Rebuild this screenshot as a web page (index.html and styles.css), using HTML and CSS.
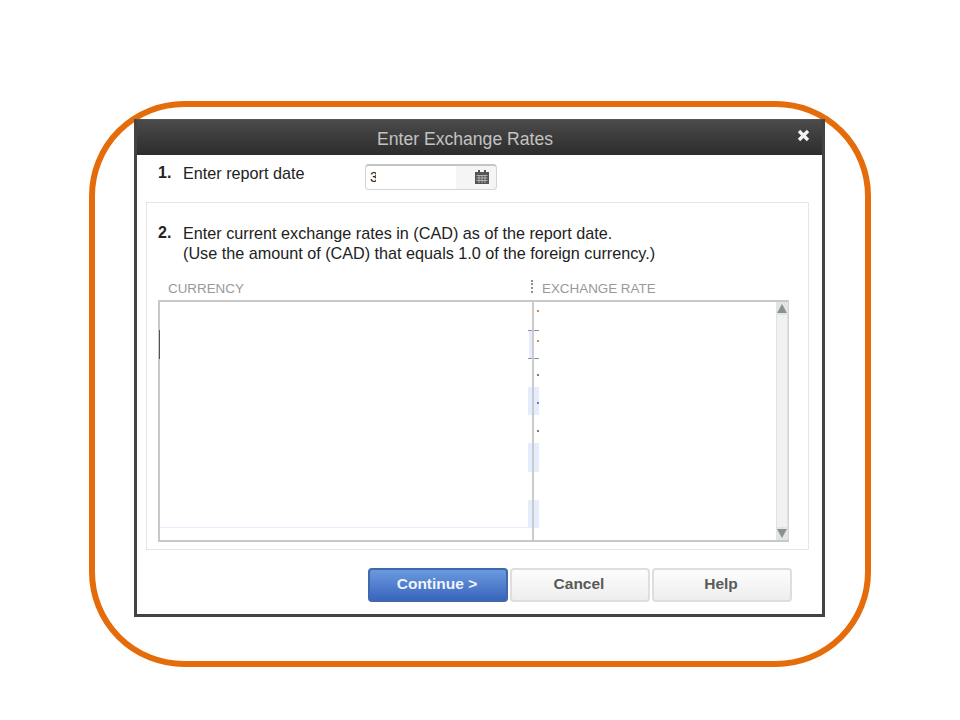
FILE: index.html
```html
<!DOCTYPE html>
<html lang="en">
<head>
    <meta charset="UTF-8">
    <meta name="viewport" content="width=device-width, initial-scale=1.0">
    <title>Enter Exchange Rates</title>
    <link rel="stylesheet" href="styles.css">
</head>
<body>
    <div class="frame">
        <div class="dialog">
            <div class="title-bar">
                <span class="title">Enter Exchange Rates</span>
                <svg class="close-icon" width="13" height="13" viewBox="0 0 13 13">
                    <path d="M2 2 L11 11 M11 2 L2 11" stroke="#f2f2f2" stroke-width="3.4" fill="none"/>
                </svg>
            </div>

            <!-- Step 1 -->
            <div class="step-date">
                <span class="step-num">1.</span>
                <span class="step-label">Enter report date</span>
                <div class="date-input">
                    <span class="date-value">3</span>
                    <svg class="cal-icon" width="14" height="14" viewBox="0 0 14 14">
                        <path d="M0 2 H3 V0 H5 V2 H9 V0 H11 V2 H14 V14 H0 Z" fill="#555"/>
                        <path d="M1.5 5.5 H12.5 M1.5 8 H12.5 M1.5 10.5 H12.5 M4 5 V13 M7 5 V13 M10 5 V13" stroke="#c4c4c4" stroke-width="0.8" fill="none"/>
                    </svg>
                </div>
            </div>

            <!-- Step 2 -->
            <div class="panel">
                <div class="step-rates">
                    <span class="step-num">2.</span>
                    <p class="step-text">Enter current exchange rates in (CAD) as of the report date.<br>(Use the amount of (CAD) that equals 1.0 of the foreign currency.)</p>
                </div>

                <div class="col-heads">
                    <span class="col-currency">CURRENCY</span>
                    <span class="col-grip"></span>
                    <span class="col-rate">EXCHANGE RATE</span>
                </div>

                <div class="grid-box">
                    <div class="rows">
                        <div class="row"><div class="cur-cell"></div><div class="rate-cell"><i class="dot dot-first"></i></div></div>
                        <div class="row current"><div class="cur-cell"></div><div class="rate-cell"><i class="dot dot-second"></i></div></div>
                        <div class="row"><div class="cur-cell"></div><div class="rate-cell"><i class="dot"></i></div></div>
                        <div class="row shade"><div class="cur-cell"></div><div class="rate-cell"><i class="dot"></i></div></div>
                        <div class="row"><div class="cur-cell"></div><div class="rate-cell"><i class="dot"></i></div></div>
                        <div class="row shade"><div class="cur-cell"></div><div class="rate-cell"></div></div>
                        <div class="row"><div class="cur-cell"></div><div class="rate-cell"></div></div>
                        <div class="row shade last"><div class="cur-cell"></div><div class="rate-cell"></div></div>
                    </div>
                    <div class="col-divider"></div>
                    <div class="scrollbar">
                        <div class="scroll-btn"><span class="arrow-up"></span></div>
                        <div class="scroll-track"></div>
                        <div class="scroll-btn"><span class="arrow-down"></span></div>
                    </div>
                </div>
            </div>

            <div class="buttons">
                <button class="btn btn-primary">Continue &gt;</button>
                <button class="btn">Cancel</button>
                <button class="btn">Help</button>
            </div>
        </div>
    </div>
</body>
</html>
```

FILE: styles.css
```css
body {
    margin: 0;
    background-color: #fff;
    font-family: 'Liberation Sans', Arial, sans-serif;
    color: #222;
}

/* Orange rounded outline */
.frame {
    box-sizing: border-box;
    width: 782px;
    height: 566px;
    margin: 101px 0 0 89px;
    padding: 12px 0 0 39px;
    border: 6px solid #e46c0a;
    border-radius: 95px;
}

.dialog {
    box-sizing: border-box;
    width: 691px;
    height: 498px;
    border: 3px solid #434343;
    border-top: 1px solid #555;
    background-color: #fff;
}

.title-bar {
    position: relative;
    height: 35px;
    padding-right: 29px;
    line-height: 39px;
    text-align: center;
    background: linear-gradient(#4b4b4b, #2c2c2c);
}

.title {
    font-size: 17.6px;
    color: #c2c2c2;
}

.close-icon {
    position: absolute;
    top: 9px;
    right: 12px;
}

/* Step rows */
.step-num {
    width: 25px;
    flex-shrink: 0;
    font-size: 16px;
    font-weight: bold;
    line-height: 20px;
}

.step-date {
    display: flex;
    align-items: flex-start;
    height: 26px;
    padding: 9px 0 12px 21px;
}

.step-date .step-num,
.step-label {
    line-height: 18px;
}

.step-label {
    width: 182px;
    font-size: 16.2px;
}

.date-input {
    box-sizing: border-box;
    display: flex;
    align-items: center;
    justify-content: space-between;
    width: 132px;
    height: 26px;
    padding: 0 7px 1px 4px;
    border: 1px solid #d4d4d4;
    border-top: 2px solid #c4c4c4;
    border-radius: 4px;
    background: linear-gradient(90deg, #fff 69%, #f5f5f5 69%);
}

.date-value {
    width: 6px;
    overflow: hidden;
    font-size: 14px;
}

.panel {
    box-sizing: border-box;
    width: 663px;
    height: 348px;
    margin-left: 9px;
    padding: 20px 0 0 11px;
    border: 1px solid #e6e6e6;
}

.step-rates {
    display: flex;
}

.step-text {
    margin: 0;
    font-size: 16.2px;
    line-height: 20px;
}

/* Column headers */
.col-heads {
    display: flex;
    align-items: center;
    height: 14px;
    margin-top: 18px;
    padding-bottom: 5px;
    font-size: 13.4px;
    color: #999;
}

.col-currency {
    width: 363px;
    padding-left: 10px;
}

.col-grip {
    box-sizing: border-box;
    width: 11px;
    height: 13px;
    margin-top: -3px;
    border-left: 2px dotted #8f8f8f;
}

/* Grid */
.grid-box {
    position: relative;
    box-sizing: border-box;
    display: flex;
    justify-content: space-between;
    width: 631px;
    height: 242px;
    border: 2px solid #c8c8c8;
    border-right: 1px solid #d4d4d4;
}

.rows {
    width: 380px;
}

.row {
    display: flex;
    height: 28.3px;
}

.cur-cell {
    box-sizing: border-box;
    width: 368px;
}

.rate-cell {
    box-sizing: border-box;
    width: 11px;
}

.row.shade .rate-cell {
    background-color: #e3edfb;
}

.row.current .cur-cell {
    box-shadow: -1px 0 0 #555;
}

.row.current .rate-cell {
    border-top: 1px solid #8e9599;
    border-bottom: 1px solid #8e9599;
    background: linear-gradient(90deg, #fff 1px, #e3edfb 1px, #e3edfb 4px, #fff 4px);
}

.row.last .cur-cell,
.row.last .rate-cell {
    border-bottom: 1px solid #e3edfb;
}

.dot {
    display: block;
    width: 2px;
    height: 2px;
    margin: 15px 0 0 9px;
    background-color: #8a6fb0;
}

.dot-first {
    margin-top: 8px;
    background-color: #d98a3c;
}

.row.current .dot-second {
    margin-top: 9px;
    background-color: #d98a3c;
}

.col-divider {
    position: absolute;
    top: 0;
    bottom: 0;
    left: 372px;
    width: 2px;
    background-color: #cbcbcb;
}

.scrollbar {
    display: flex;
    flex-direction: column;
    width: 12px;
    background-color: #f1f1f1;
}

.scroll-btn {
    display: flex;
    align-items: center;
    justify-content: center;
    height: 13px;
    background-color: #e4e4e4;
}

.scroll-track {
    flex: 1;
    border-left: 1px solid #e0e0e0;
    border-right: 1px solid #e0e0e0;
}

.arrow-up,
.arrow-down {
    width: 0;
    height: 0;
    border-left: 5px solid transparent;
    border-right: 5px solid transparent;
}

.arrow-up {
    border-bottom: 9px solid #8a9192;
}

.arrow-down {
    border-top: 9px solid #8a9192;
}

/* Footer buttons */
.buttons {
    display: flex;
    justify-content: flex-end;
    gap: 2px;
    margin-top: 18px;
    padding-right: 30px;
}

.btn {
    box-sizing: border-box;
    width: 140px;
    height: 34px;
    padding: 0 2px 2px 0;
    border: 2px solid #dedede;
    border-radius: 4px;
    background: linear-gradient(#fdfdfd, #eeeeee);
    font-family: 'Liberation Sans', Arial, sans-serif;
    font-size: 15.5px;
    font-weight: bold;
    color: #5a5a5a;
}

.btn-primary {
    border: 2px solid #3f68ad;
    background: linear-gradient(#6a9ade, #3a65bd);
    color: #eef4fd;
}
```
